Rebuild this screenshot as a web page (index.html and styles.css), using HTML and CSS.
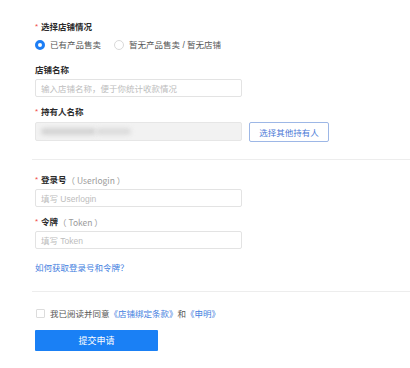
FILE: index.html
```html
<!DOCTYPE html>
<html lang="zh">
<head>
<meta charset="utf-8">
<link rel="stylesheet" href="styles.css">
</head>
<body>
<form class="form">
  <div class="label label-first"><span class="req">*</span><span class="lt">选择店铺情况</span></div>
  <div class="radios">
    <span class="radio"><span class="dot on"></span><span class="rtext">已有产品售卖</span></span>
    <span class="radio"><span class="dot"></span><span class="rtext">暂无产品售卖 / 暂无店铺</span></span>
  </div>

  <div class="label label-gap"><span class="lt">店铺名称</span></div>
  <div class="input"><span class="ph">输入店铺名称，便于你统计收款情况</span></div>

  <div class="label label-gap2"><span class="req">*</span><span class="lt">持有人名称</span></div>
  <div class="holder-row">
    <div class="input input-disabled"><span class="blur"></span><span class="blur blur-2"></span></div>
    <button type="button" class="btn-outline">选择其他持有人</button>
  </div>

  <div class="divider divider-1"></div>

  <div class="label label-after-div"><span class="req">*</span><span class="lt">登录号</span><span class="hint">（ Userlogin ）</span></div>
  <div class="input"><span class="ph">填写 Userlogin</span></div>

  <div class="label label-gap2"><span class="req">*</span><span class="lt">令牌</span><span class="hint">（ Token ）</span></div>
  <div class="input"><span class="ph">填写 Token</span></div>

  <a class="link">如何获取登录号和令牌？</a>

  <div class="divider divider-2"></div>

  <div class="agree">
    <span class="checkbox"></span>
    <span class="atext">我已阅读并同意<span class="alink">《店铺绑定条款》</span>和<span class="alink">《申明》</span></span>
  </div>

  <button type="button" class="btn-primary">提交申请</button>
</form>
</body>
</html>
```

FILE: styles.css
```css
* { box-sizing: border-box; }
html, body {
  margin: 0;
  padding: 0;
  background: #ffffff;
}
body {
  font-family: "Liberation Sans", "Noto Sans CJK SC", sans-serif;
  font-size: 8.5px;
  color: #333;
}
.form {
  display: flex;
  flex-direction: column;
  align-items: flex-start;
  padding-left: 35px;
  padding-top: 21px;
}
.label {
  height: 12px;
  line-height: 12px;
  display: flex;
  align-items: center;
  color: #2b2b2b;
  white-space: pre;
}
.label-gap { margin-top: 13px; }
.label-gap2 { margin-top: 9px; }
.label-after-div { margin-top: 14px; }
.req {
  color: #f04a4a;
  font-size: 8px;
  width: 6px;
}
.lt { font-weight: 600; }
.hint {
  color: #9a9a9a;
  font-weight: 400;
  font-family: "Noto Sans CJK SC", "Liberation Sans", sans-serif;
}
.radios {
  margin-top: 6px;
  height: 12px;
  display: flex;
  align-items: center;
  gap: 13px;
}
.radio {
  display: flex;
  align-items: center;
  gap: 5px;
  color: #555;
}
.dot {
  width: 10px;
  height: 10px;
  border-radius: 50%;
  border: 1px solid #d9d9d9;
  background: #fff;
}
.dot.on {
  border: 3px solid #1d7ef5;
}
.rtext { line-height: 12px; }
.input {
  margin-top: 3px;
  width: 207px;
  height: 18px;
  border: 1px solid #e3e3e3;
  border-radius: 2px;
  background: #fff;
  display: flex;
  align-items: center;
  padding-left: 5px;
}
.ph { color: #bdbdbd; }
.holder-row {
  margin-top: 3px;
  display: flex;
  align-items: center;
  gap: 7px;
}
.holder-row .input {
  margin-top: 0;
  height: 19px;
}
.input-disabled {
  background: #f2f2f2;
  border-color: #e6e6e6;
}
.blur {
  width: 55px;
  height: 7px;
  background: #d4d4d4;
  border-radius: 4px;
  filter: blur(2px);
}
.blur-2 {
  width: 35px;
  background: #dcdcdc;
}
.btn-outline {
  height: 20px;
  width: 80px;
  margin-top: 1px;
  padding: 0;
  border: 1px solid #9db7e6;
  border-radius: 2px;
  background: #fff;
  color: #4a79d6;
  font: inherit;
  font-size: 8.5px;
}
.divider {
  height: 1px;
  background: #ededed;
  margin-left: -3px;
  width: 378px;
}
.divider-1 { margin-top: 17px; }
.divider-2 { margin-top: 17px; }
.link {
  margin-top: 13px;
  height: 12px;
  line-height: 12px;
  color: #3f7ee0;
}
.agree {
  margin-top: 15px;
  height: 12px;
  display: flex;
  align-items: center;
  gap: 5px;
  color: #555;
}
.atext { white-space: pre; }
.checkbox {
  width: 9px;
  height: 9px;
  border: 1px solid #dcdcdc;
  border-radius: 1px;
  background: #fff;
  margin-left: 1px;
}
.alink { color: #3f7ee0; }
.btn-primary {
  margin-top: 11px;
  width: 123px;
  height: 21px;
  border: none;
  border-radius: 1px;
  background: #1a80f5;
  color: #fff;
  font: inherit;
  font-size: 9px;
  padding: 0;
}
```
